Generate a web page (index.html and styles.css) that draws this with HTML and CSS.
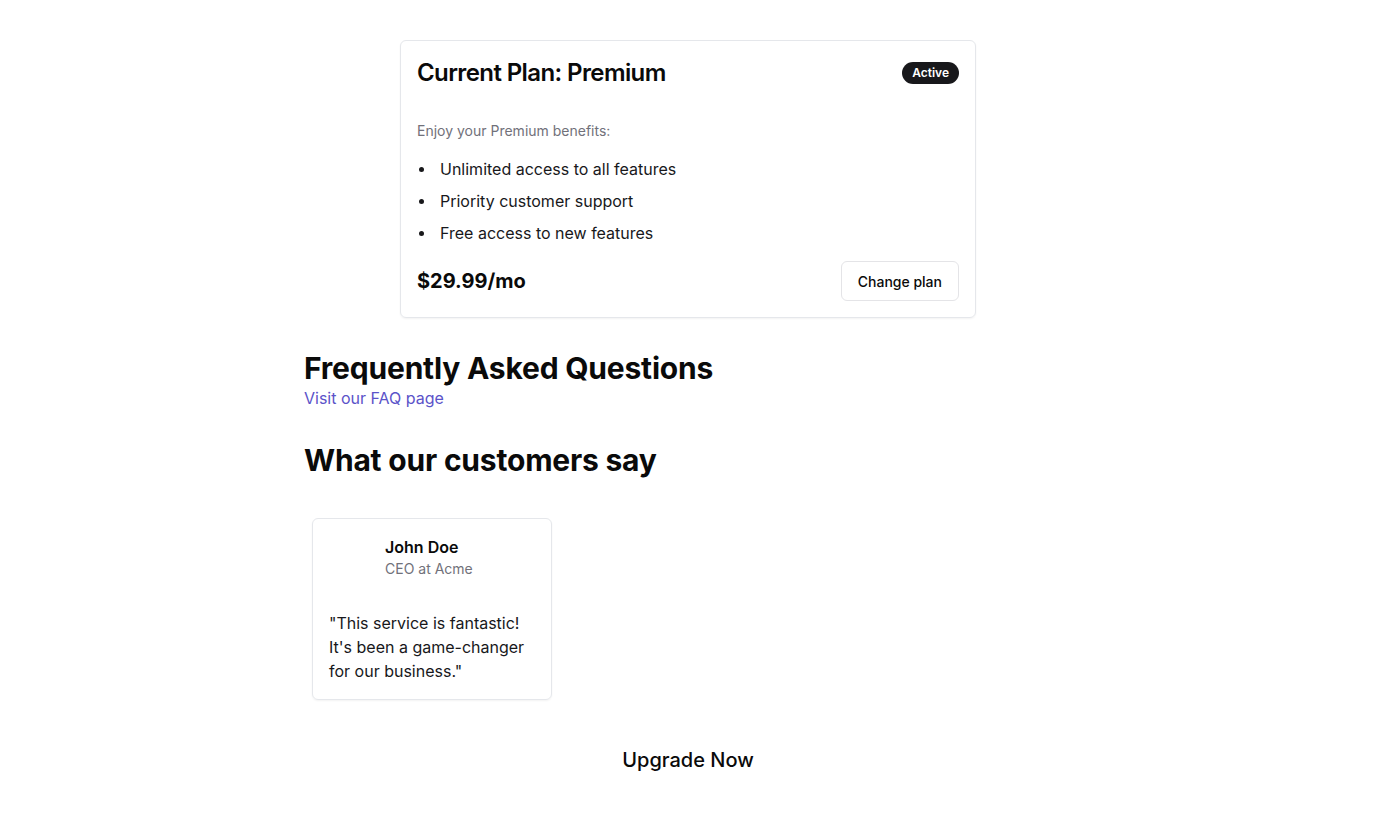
FILE: index.html
```html
<!DOCTYPE html>
<html lang="en">
<head>
<meta charset="utf-8">
<title>Plan</title>
<link rel="stylesheet" href="styles.css">
</head>
<body>
<main class="page">
  <section class="plan-card">
    <div class="plan-head">
      <h2 class="plan-title">Current Plan: Premium</h2>
      <span class="badge">Active</span>
    </div>
    <p class="plan-desc">Enjoy your Premium benefits:</p>
    <ul class="benefits">
      <li>Unlimited access to all features</li>
      <li>Priority customer support</li>
      <li>Free access to new features</li>
    </ul>
    <div class="plan-foot">
      <span class="price">$29.99/mo</span>
      <button class="btn-outline">Change plan</button>
    </div>
  </section>

  <section class="faq">
    <h2 class="section-title">Frequently Asked Questions</h2>
    <a class="faq-link" href="#">Visit our FAQ page</a>
  </section>

  <section class="testimonials">
    <h2 class="section-title">What our customers say</h2>
    <div class="t-list">
      <div class="t-item">
        <div class="t-card">
          <div class="t-head">
            <span class="avatar"></span>
            <div class="t-who">
              <div class="t-name">John Doe</div>
              <div class="t-role">CEO at Acme</div>
            </div>
          </div>
          <p class="t-quote">"This service is fantastic! It's been a game-changer for our business."</p>
        </div>
      </div>
    </div>
  </section>

  <div class="cta">
    <button class="btn-upgrade">Upgrade Now</button>
  </div>
</main>
</body>
</html>
```
FILE: styles.css
```css
* { box-sizing: border-box; }
html, body { margin: 0; padding: 0; background: #fff; }
body {
  font-family: Inter, "Noto Sans", sans-serif;
  color: #0a0a0a;
}
.page {
  width: 768px;
  margin: 0 auto;
  padding-top: 40px;
}
.plan-card {
  width: 576px;
  margin: 0 auto;
  border: 1px solid #e5e7eb;
  border-radius: 6px;
  box-shadow: 0 1px 2px rgba(0,0,0,0.05);
  padding: 16px;
}
.plan-head {
  display: flex;
  justify-content: space-between;
  align-items: center;
  height: 32px;
}
.plan-title {
  margin: 0;
  font-size: 24px;
  line-height: 32px;
  font-weight: 600;
  letter-spacing: -0.6px;
}
.badge {
  background: #18181b;
  color: #fff;
  font-size: 12px;
  font-weight: 600;
  line-height: 16px;
  padding: 3px 10px;
  border-radius: 999px;
}
.plan-desc {
  margin: 32px 0 0;
  font-size: 14px;
  line-height: 20px;
  color: #71717a;
}
.benefits {
  list-style: none;
  margin: 16px 0 0;
  padding-left: 2px;
  display: flex;
  flex-direction: column;
  gap: 8px;
  font-size: 16px;
  line-height: 24px;
  color: #18181b;
}
.benefits li {
  display: flex;
  align-items: center;
}
.benefits li::before {
  content: "";
  width: 5px;
  height: 5px;
  border-radius: 50%;
  background: #18181b;
  margin-right: 16px;
  flex: none;
}
.plan-foot {
  margin-top: 16px;
  display: flex;
  justify-content: space-between;
  align-items: center;
}
.price {
  font-size: 20px;
  font-weight: 700;
  line-height: 28px;
}
.btn-outline {
  font-family: inherit;
  background: #fff;
  border: 1px solid #e4e4e7;
  border-radius: 6px;
  height: 40px;
  padding: 0 16px;
  font-size: 14px;
  font-weight: 500;
  color: #0a0a0a;
}
.faq { margin-top: 32px; }
.section-title {
  margin: 0;
  font-size: 30px;
  line-height: 36px;
  font-weight: 700;
  letter-spacing: -0.2px;
}
.faq-link {
  display: block;
  color: #5b53c9;
  text-decoration: none;
  font-size: 16px;
  line-height: 24px;
}
.testimonials { margin-top: 32px; }
.t-list {
  margin-top: 32px;
  display: flex;
}
.t-item {
  padding: 8px;
  width: 256px;
}
.t-card {
  width: 240px;
  border: 1px solid #e5e7eb;
  border-radius: 6px;
  box-shadow: 0 1px 2px rgba(0,0,0,0.05);
  padding: 16px;
}
.t-head {
  display: flex;
  gap: 16px;
}
.avatar {
  width: 40px;
  height: 40px;
  flex: none;
}
.t-name {
  font-size: 16px;
  line-height: 24px;
  font-weight: 600;
}
.t-role {
  font-size: 14px;
  line-height: 20px;
  color: #71717a;
}
.t-quote {
  margin: 32px 0 0;
  font-size: 16px;
  line-height: 24px;
  color: #18181b;
}
.cta {
  display: flex;
  justify-content: center;
  margin-top: 38px;
}
.btn-upgrade {
  font-family: inherit;
  background: none;
  border: none;
  padding: 0;
  font-size: 20px;
  line-height: 28px;
  font-weight: 500;
  color: #0a0a0a;
}
```
